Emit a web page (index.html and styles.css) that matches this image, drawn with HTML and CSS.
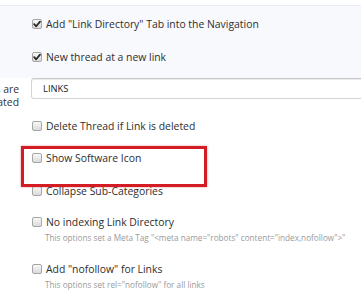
FILE: index.html
```html
<!DOCTYPE html>
<html>
<head>
<meta charset="utf-8">
<link rel="stylesheet" href="styles.css">
</head>
<body>
<div class="page">
  <div class="band">
    <div class="opt"><span class="cb checked"><svg viewBox="0 0 10 10" width="10" height="10"><path d="M2.2 5.2 L4.2 7.3 L8 2.6" fill="none" stroke="#2a2a2a" stroke-width="1.8" stroke-linecap="round" stroke-linejoin="round"/></svg></span><span class="lbl">Add "Link Directory" Tab into the Navigation</span></div>
    <div class="opt second"><span class="cb checked"><svg viewBox="0 0 10 10" width="10" height="10"><path d="M2.2 5.2 L4.2 7.3 L8 2.6" fill="none" stroke="#2a2a2a" stroke-width="1.8" stroke-linecap="round" stroke-linejoin="round"/></svg></span><span class="lbl">New thread at a new link</span></div>
  </div>
  <div class="field">
    <div class="flabel"><span>Link threads are</span><span>created</span></div>
    <div class="input">LINKS</div>
  </div>
  <div class="list">
    <div class="item"><div class="opt"><span class="cb"></span><span class="lbl">Delete Thread if Link is deleted</span></div></div>
    <div class="item"><div class="opt"><span class="cb"></span><span class="lbl">Show Software Icon</span></div></div>
    <div class="item"><div class="opt"><span class="cb"></span><span class="lbl">Collapse Sub-Categories</span></div></div>
    <div class="item"><div class="opt"><span class="cb"></span><span class="lbl">No indexing Link Directory</span></div><div class="hint">This options set a Meta Tag "&lt;meta name="robots" content="index,nofollow"&gt;"</div></div>
    <div class="item"><div class="opt"><span class="cb"></span><span class="lbl">Add "nofollow" for Links</span></div><div class="hint">This options set rel="nofollow" for all links</div></div>
  </div>
  <div class="highlight"></div>
</div>
</body>
</html>
```
FILE: styles.css
```css
html, body {
  margin: 0;
  padding: 0;
  background: #ffffff;
}
body {
  font-family: "Open Sans", "Noto Sans", sans-serif;
  font-size: 10.4px;
  color: #2e2e2e;
  width: 361px;
  height: 300px;
  overflow: hidden;
}
.page {
  position: relative;
  height: 300px;
}
.band {
  margin-top: 5px;
  border-top: 1px solid #e9ecf3;
  background: #f8f9fd;
  height: 73px;
  box-sizing: border-box;
  padding-top: 10px;
}
.opt {
  display: flex;
  align-items: center;
  height: 16px;
  padding-left: 32px;
}
.second {
  margin-top: 17px;
}
.cb {
  width: 10px;
  height: 10px;
  box-sizing: border-box;
  border: 1px solid #a6a6a6;
  border-radius: 2px;
  background: linear-gradient(#f9f9f9, #dadada);
  margin-right: 4px;
  flex: none;
  display: flex;
  align-items: center;
  justify-content: center;
  overflow: hidden;
}
.cb svg {
  display: block;
  flex: none;
}
.lbl {
  line-height: 16px;
  white-space: nowrap;
}
.field {
  display: flex;
  align-items: flex-start;
  height: 21px;
}
.flabel {
  width: 19px;
  overflow: hidden;
  display: flex;
  flex-direction: column;
  align-items: flex-end;
  padding-top: 4.5px;
  line-height: 13px;
  color: #333;
  white-space: nowrap;
}
.input {
  margin-left: 12px;
  flex: 1;
  margin-right: -20px;
  height: 21px;
  box-sizing: border-box;
  border: 1px solid #d4d4d4;
  border-top-color: #c8c8c8;
  border-radius: 3px;
  box-shadow: inset 0 1px 0 #ececec;
  background: #fff;
  padding-left: 11px;
  font-size: 9.4px;
  line-height: 19px;
  color: #222;
}
.list {
  margin-top: 10.25px;
}
.item {
  padding: 8.25px 0;
}
.item:nth-child(4) {
  padding-top: 7.25px;
}
.hint {
  padding-left: 45px;
  margin-top: 2px;
  line-height: 12px;
  font-size: 8.2px;
  color: #9a9a9a;
  white-space: nowrap;
}
.highlight {
  position: absolute;
  left: 21px;
  top: 141px;
  width: 186px;
  height: 41px;
  box-sizing: border-box;
  border: 3px solid #d41c24;
  box-shadow: 0 0 2px rgba(190, 20, 20, 0.45);
}
```
